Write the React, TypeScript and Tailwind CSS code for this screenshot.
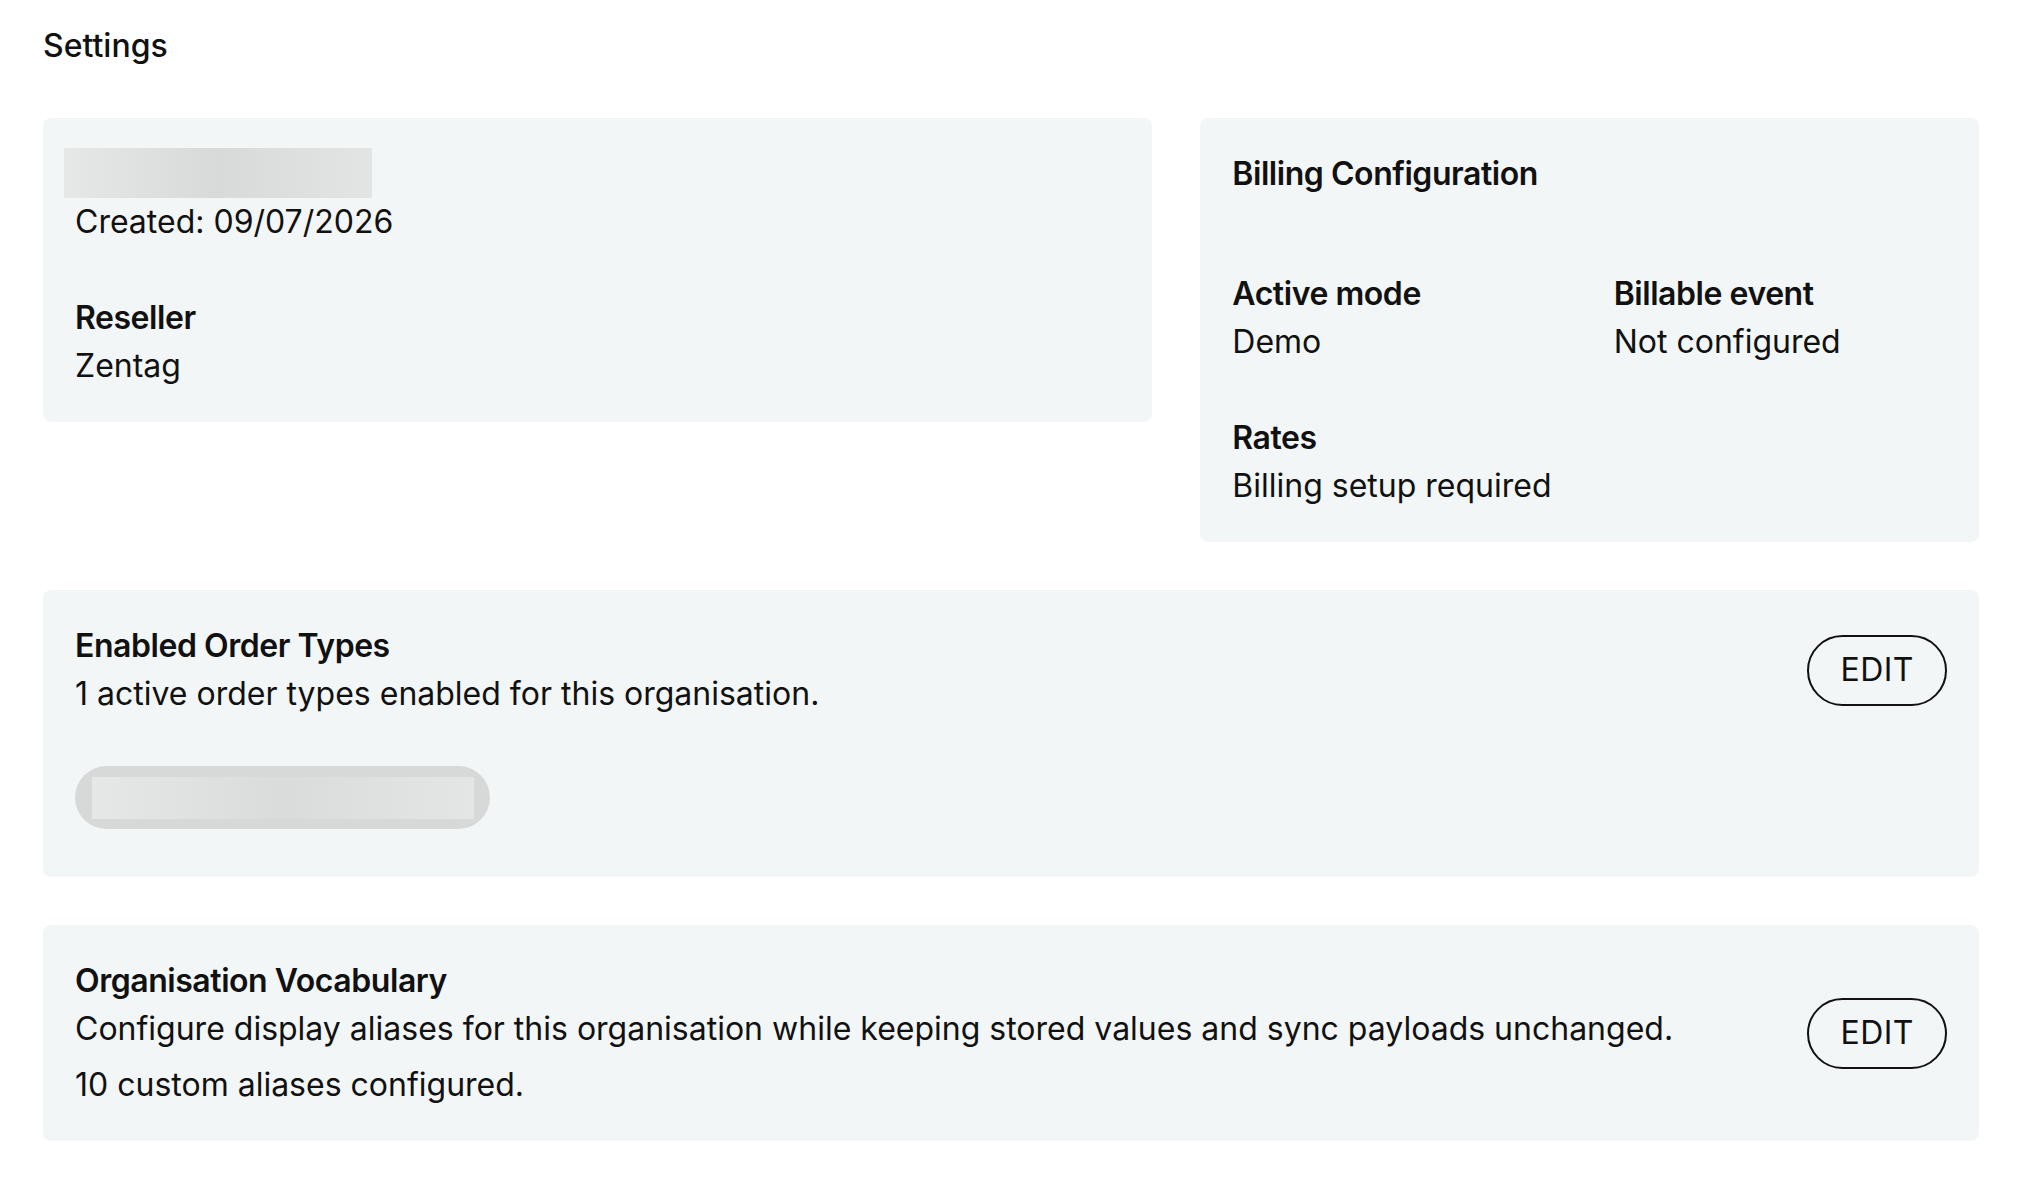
const font = { fontFamily: "Inter, 'Noto Sans', sans-serif" };

function Card({ className = "", children }: { className?: string; children: React.ReactNode }) {
  return <div className={`rounded-lg bg-[#f3f6f7] p-8 ${className}`}>{children}</div>;
}

function EditButton() {
  return (
    <button className="h-[71px] shrink-0 rounded-full border-2 border-[#111] px-[31px] text-[32px] leading-[48px] tracking-[0.5px] text-[#111]">
      EDIT
    </button>
  );
}

function Label({ children }: { children: React.ReactNode }) {
  return <div className="font-semibold tracking-[-0.45px]">{children}</div>;
}

function Field({ label, value }: { label: string; value: string }) {
  return (
    <div>
      <Label>{label}</Label>
      <div>{value}</div>
    </div>
  );
}

export default function App() {
  return (
    <div
      className="min-h-screen bg-white pl-[43px] pr-[53px] pt-[22px] text-[32px] leading-[48px] text-[#111]"
      style={font}
    >
      <div className="flex flex-col gap-12">
        <h1 className="font-medium">Settings</h1>

        <div className="grid grid-cols-12 items-start gap-12">
          {/* Organisation summary */}
          <Card className="col-span-7">
            <div className="flex h-[48px] items-start">
              {/* redacted organisation name */}
              <div className="-ml-[11px] -mt-[2px] h-[50px] w-[308px] bg-gradient-to-r from-[#e6e7e7] via-[#d8dada] to-[#e3e4e4]" />
            </div>
            <div>Created: 09/07/2026</div>
            <div className="mt-12">
              <Field label="Reseller" value="Zentag" />
            </div>
          </Card>

          {/* Billing */}
          <Card className="col-span-5">
            <Label>Billing Configuration</Label>
            <div className="mt-[72px] grid grid-cols-2 gap-12">
              <Field label="Active mode" value="Demo" />
              <Field label="Billable event" value="Not configured" />
              <Field label="Rates" value="Billing setup required" />
            </div>
          </Card>
        </div>

        <Card>
          <div className="flex items-center justify-between gap-8">
            <div>
              <Label>Enabled Order Types</Label>
              <div>1 active order types enabled for this organisation.</div>
            </div>
            <EditButton />
          </div>
          <div className="mb-4 mt-12 flex">
            {/* chip with redacted label */}
            <div className="flex h-[63px] w-[415px] items-center rounded-full bg-[#d7d9d9] pl-[17px]">
              <div className="h-[42px] w-[382px] bg-gradient-to-r from-[#e6e7e7] via-[#dadcdc] to-[#e4e5e5]" />
            </div>
          </div>
        </Card>

        <Card>
          <div className="flex items-center justify-between gap-8">
            <div>
              <Label>Organisation Vocabulary</Label>
              <div>
                Configure display aliases for this organisation while keeping stored values and sync payloads
                unchanged.
              </div>
              <div className="mt-2">10 custom aliases configured.</div>
            </div>
            <EditButton />
          </div>
        </Card>
      </div>
    </div>
  );
}
